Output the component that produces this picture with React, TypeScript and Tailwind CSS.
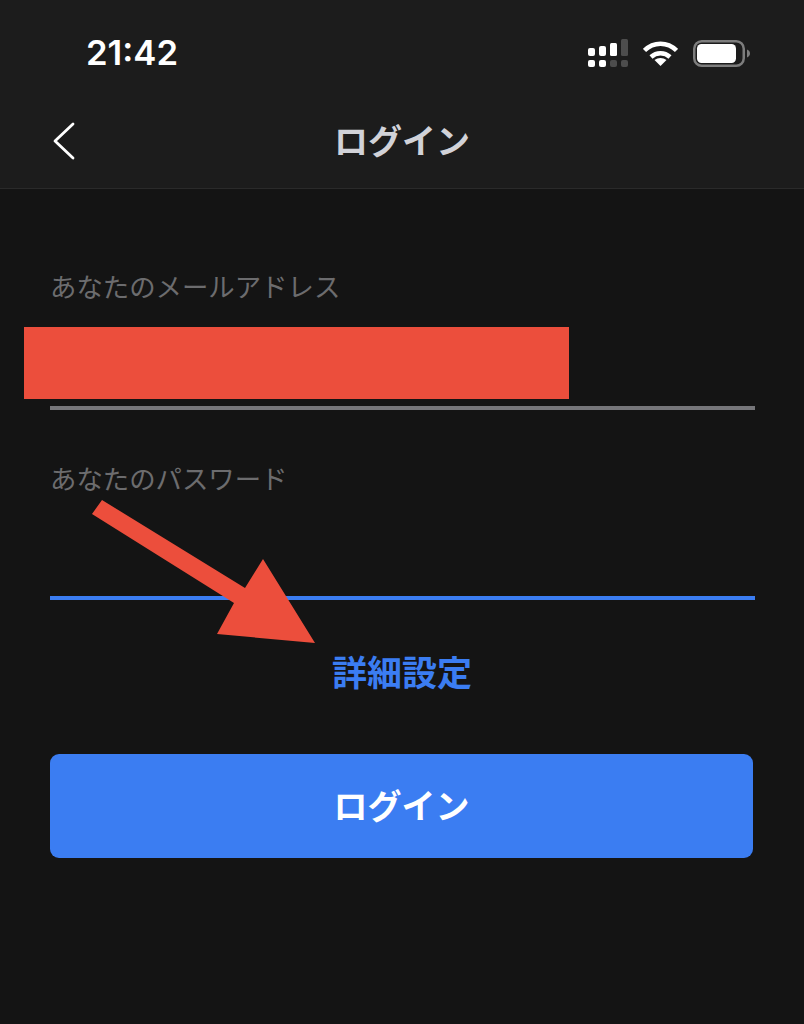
export default function App() {
  return (
    <main className="relative h-[1024px] w-[804px] overflow-hidden bg-[#141414] font-['Noto_Sans_CJK_JP','Noto_Sans',sans-serif]">
      {/* Status bar + title */}
      <header className="h-[189px] border-b border-[#2a2a2a] bg-[#1c1c1c]">
        <div className="flex h-[100px] items-start justify-between pl-[86px] pr-[54px] pt-[31px]">
          <span className="-mt-px font-['Inter',sans-serif] text-[34.700px] font-semibold leading-[44px] text-white">21:42</span>
          <div className="flex items-center gap-[15px] pt-[8px]">
            <svg width="40" height="28" viewBox="0 0 40 28" fill="#fff">
              <rect x="0" y="9" width="7" height="8" rx="2" />
              <rect x="11" y="7" width="7" height="10" rx="2" />
              <rect x="22" y="4" width="7" height="13" rx="1.500" />
              <rect x="33" y="0" width="7" height="17" rx="1.500" fill="#4d4d4d" />
              <rect x="0" y="21" width="7" height="7" rx="2" />
              <rect x="11" y="21" width="7" height="7" rx="2" />
              <rect x="22" y="21" width="7" height="7" rx="2" fill="#4d4d4d" />
              <rect x="33" y="21" width="7" height="7" rx="2" fill="#4d4d4d" />
            </svg>
            <svg width="35" height="25" viewBox="0 0 35 25" fill="none" stroke="#fff" strokeWidth="4.500">
              <path d="M1.500 9.500C10.500 .5 24.500 .5 33.500 9.500" />
              <path d="M8 16C13.500 11 21.500 11 27 16" />
              <path d="M17.500 25l-6-6c3.500-2.800 8.500-2.800 12 0z" fill="#fff" stroke="none" />
            </svg>
            <svg width="57" height="27" viewBox="0 0 57 27" fill="none">
              <rect x="1.250" y="1.250" width="49.500" height="24.500" rx="7.500" stroke="#7d7d7d" strokeWidth="2.500" />
              <rect x="4" y="4" width="39" height="19" rx="4.500" fill="#fff" />
              <path d="M54 9.500c2 .8 3 2.200 3 4s-1 3.200-3 4z" fill="#7d7d7d" />
            </svg>
          </div>
        </div>
        <div className="relative flex h-[80px] items-center justify-center">
          <svg className="absolute left-[52px] top-[22px]" width="24" height="38" viewBox="0 0 24 38" fill="none" stroke="#fff" strokeWidth="2.800" strokeLinecap="round" strokeLinejoin="round">
            <path d="M21 2L3 19l18 17" />
          </svg>
          <h1 className="text-[34px] font-bold leading-none text-[#d1d2d8]">ログイン</h1>
        </div>
      </header>

      {/* Form */}
      <section className="px-[50px] pt-[79px]">
        <p className="text-[26.400px] leading-[36px] text-[#6c6c6e]">あなたのメールアドレス</p>
        <div className="-ml-[26px] mt-[23px] h-[72px] w-[545px] bg-[#ec4e3c]" />
        <div className="mt-[7px] h-[4px] w-[705px] bg-[#76767a]" />

        <p className="mt-[50px] text-[26.400px] leading-[36px] text-[#6c6c6e]">あなたのパスワード</p>
        <div className="mt-[100px] h-[4px] w-[705px] bg-[#3b7df2]" />

        <p className="mt-[48px] text-center text-[35px] font-bold leading-[46px] text-[#3b7df2]">詳細設定</p>

        <button className="mt-[60px] flex h-[104px] w-[703px] items-center justify-center rounded-[9px] bg-[#3b7df2] pb-[3px] text-[34px] font-bold text-white">
          ログイン
        </button>
      </section>

      {/* Annotation arrow */}
      <svg className="absolute left-0 top-0" width="804" height="1024" viewBox="0 0 804 1024">
        <polygon points="102,500 92,514 234,603 217,634 315,643 263,559 245,588" fill="#ec4e3c" />
      </svg>
    </main>
  )
}
